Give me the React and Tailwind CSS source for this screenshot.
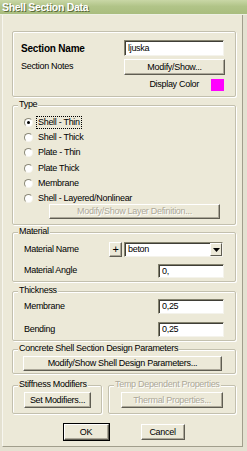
import React from "react";

function Btn({ children, className = "", disabled = false, def = false }) {
  return (
    <div
      className={
        "box-border flex items-center justify-center bg-[#ece9d8] border border-t-[#ffffff] border-l-[#ffffff] border-r-[#5f5d52] border-b-[#5f5d52] shadow-[inset_-1px_-1px_0_#aca899] leading-none " +
        (def ? "outline outline-1 outline-black " : "") +
        (disabled ? "text-[#aca899] [text-shadow:1px_1px_0_#fff] " : "text-black ") +
        className
      }
    >
      {children}
    </div>
  );
}

function Field({ children, className = "" }) {
  return (
    <div
      className={
        "box-border flex items-center bg-white border border-t-[#85836f] border-l-[#85836f] border-r-[#f4f3ec] border-b-[#f4f3ec] shadow-[inset_1px_1px_0_#3f3e36] pl-[3px] leading-none text-black " +
        className
      }
    >
      {children}
    </div>
  );
}

function Group({ label, disabled = false, className = "", children }) {
  return (
    <div
      className={
        "relative box-border border border-[#c3c0ae] rounded-[2px] shadow-[inset_1px_1px_0_#fff,1px_1px_0_#fff] " +
        className
      }
    >
      {label && (
        <span
          className={
            "absolute top-[-7px] left-[5px] px-[1px] h-[11px] leading-[11px] bg-[#ece9d8] whitespace-nowrap " +
            (disabled ? "text-[#aca899] [text-shadow:1px_1px_0_#fff]" : "text-black")
          }
        >
          {label}
        </span>
      )}
      {children}
    </div>
  );
}

function Radio({ label, checked = false, focus = false }) {
  return (
    <div className="flex items-center h-[11px] pl-[11px]">
      <div className="box-border w-[9px] h-[9px] rounded-full bg-white border border-t-[#8b8977] border-l-[#8b8977] border-r-[#f6f5ee] border-b-[#f6f5ee] flex items-center justify-center">
        {checked && <div className="w-[3px] h-[3px] rounded-full bg-black" />}
      </div>
      <span
        className={
          "ml-[3px] px-[1px] leading-[11px] whitespace-nowrap " +
          (focus ? "border border-dotted border-black" : "border border-transparent")
        }
      >
        {label}
      </span>
    </div>
  );
}

export default function App() {
  return (
    <div className="w-[247px] h-[451px] flex flex-col overflow-hidden bg-[#e4e1d1] font-['Liberation_Sans',Arial,sans-serif] text-[9px] tracking-[-0.3px] text-black">
      {/* Title bar */}
      <div className="h-[14px] shrink-0 flex items-center pl-[2px] bg-[linear-gradient(to_bottom,#c9d7a6_0%,#b1c488_45%,#a9bd7e_100%)]">
        <span className="text-white font-bold text-[10.5px] tracking-[-0.3px] leading-none [text-shadow:1px_1px_0_#5b6b3c] whitespace-nowrap">
          Shell Section Data
        </span>
      </div>

      {/* Body frame */}
      <div className="flex-1 flex flex-col pl-[2px] pr-[4px] pb-[4px] border-t border-t-[#eef0e4]">
        <div className="flex-1 flex flex-col bg-[#ece9d8] border-l border-l-[#f7f6ef] border-r border-b border-r-[#a19e8c] border-b-[#a19e8c] pl-[9px] pr-[6px] pt-[16px]">
          {/* Top group */}
          <Group className="h-[66px] pt-[8px]">
            <div className="flex items-center h-[16px]">
              <span className="flex-1 pl-[8px] font-bold text-[10px] tracking-[-0.2px]">Section Name</span>
              <Field className="w-[100px] h-[16px] mr-[11px]">ljuska</Field>
            </div>
            <div className="flex items-center h-[16px] mt-[3px]">
              <span className="flex-1 pl-[8px]">Section Notes</span>
              <Btn className="w-[101px] h-[16px] mr-[10px]">Modify/Show...</Btn>
            </div>
            <div className="flex items-center justify-end h-[12px] mt-[4px]">
              <span>Display Color</span>
              <div className="w-[13px] h-[12px] bg-[#ff00ff] ml-[12px] mr-[11px]" />
            </div>
          </Group>

          {/* Type group */}
          <Group label="Type" className="h-[120px] mt-[8px] pt-[10.5px]">
            <div className="flex flex-col gap-[4.4px]">
              <Radio label="Shell - Thin" checked focus />
              <Radio label="Shell - Thick" />
              <Radio label="Plate - Thin" />
              <Radio label="Plate Thick" />
              <Radio label="Membrane" />
              <Radio label="Shell - Layered/Nonlinear" />
            </div>
            <Btn disabled className="w-[171px] h-[15px] ml-[36px]">
              Modify/Show Layer Definition...
            </Btn>
          </Group>

          {/* Material group */}
          <Group label="Material" className="h-[50px] mt-[7px] pt-[9px]">
            <div className="flex items-center h-[15px]">
              <span className="flex-1 pl-[11px]">Material Name</span>
              <Btn className="w-[13px] h-[15px] text-[11px]">+</Btn>
              <Field className="w-[99px] h-[15px] ml-[2px] mr-[12px] pr-0 justify-between">
                <span>beton</span>
                <div className="box-border w-[12px] h-[13px] bg-[#ece9d8] border border-t-white border-l-white border-r-[#5f5d52] border-b-[#5f5d52] flex items-center justify-center">
                  <svg width="7" height="4" viewBox="0 0 7 4">
                    <path d="M0 0H7L3.5 4Z" fill="#000" />
                  </svg>
                </div>
              </Field>
            </div>
            <div className="flex items-center h-[14px] mt-[7px]">
              <span className="flex-1 pl-[11px]">Material Angle</span>
              <Field className="w-[66px] h-[14px] mr-[11px]">0,</Field>
            </div>
          </Group>

          {/* Thickness group */}
          <Group label="Thickness" className="h-[50px] mt-[9px] pt-[7px]">
            <div className="flex items-center h-[15px]">
              <span className="flex-1 pl-[11px]">Membrane</span>
              <Field className="w-[66px] h-[15px] mr-[11px]">0,25</Field>
            </div>
            <div className="flex items-center h-[15px] mt-[8px]">
              <span className="flex-1 pl-[11px]">Bending</span>
              <Field className="w-[66px] h-[15px] mr-[11px]">0,25</Field>
            </div>
          </Group>

          {/* Concrete group */}
          <Group label="Concrete Shell Section Design Parameters" className="h-[25px] mt-[8px] pt-[6px] pl-[10px] pr-[13px]">
            <Btn className="h-[15px]">Modify/Show Shell Design Parameters...</Btn>
          </Group>

          {/* Stiffness / Temp */}
          <div className="flex gap-[6px] mt-[11px] h-[29px]">
            <Group label="Stiffness Modifiers" className="w-[90px] h-[29px] pt-[6px] pl-[11px]">
              <Btn className="w-[67px] h-[16px]">Set Modifiers...</Btn>
            </Group>
            <Group label="Temp Dependent Properties" disabled className="flex-1 h-[29px] pt-[6px] pl-[12px]">
              <Btn disabled className="w-[102px] h-[16px]">Thermal Properties...</Btn>
            </Group>
          </div>

          {/* OK / Cancel */}
          <div className="flex justify-center gap-[32px] mt-[10px]">
            <Btn def className="w-[45px] h-[16px]">OK</Btn>
            <Btn className="w-[44px] h-[16px]">Cancel</Btn>
          </div>
        </div>
      </div>
    </div>
  );
}
